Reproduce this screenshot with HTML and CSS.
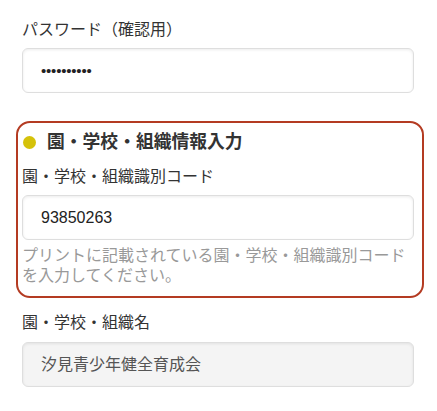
FILE: index.html
```html
<!DOCTYPE html>
<html lang="ja">
<head>
<meta charset="utf-8">
<link rel="stylesheet" href="styles.css">
</head>
<body>
<div class="form">
  <div class="field first">
    <div class="label">パスワード（確認用）</div>
    <div class="input"><span class="dots">••••••••••</span></div>
  </div>
  <div class="group">
    <div class="heading"><span class="dot"></span>園・学校・組織情報入力</div>
    <div class="field">
      <div class="label">園・学校・組織識別コード</div>
      <div class="input">93850263</div>
      <div class="hint">プリントに記載されている園・学校・組織識別コードを入力してください。</div>
    </div>
  </div>
  <div class="field last">
    <div class="label">園・学校・組織名</div>
    <div class="input disabled">汐見青少年健全育成会</div>
  </div>
</div>
</body>
</html>
```
FILE: styles.css
```css
html, body {
  margin: 0;
  padding: 0;
  background: #fff;
}
body {
  font-family: "Liberation Sans", "Noto Sans CJK JP", sans-serif;
  font-size: 16px;
  color: #333;
}
.form {
  padding: 18px 23px 0 22px;
}
.label {
  line-height: 24px;
  color: #333;
  margin-bottom: 6px;
}
.input {
  box-sizing: border-box;
  height: 45px;
  border: 1px solid #dedede;
  border-radius: 6px;
  background: #fff;
  box-shadow: inset 0 1px 3px rgba(0, 0, 0, 0.08);
  padding: 0 18px;
  display: flex;
  align-items: center;
  color: #222;
  line-height: 20px;
}
.dots {
  font-size: 15px;
  letter-spacing: -0.2px;
}
.input.disabled {
  background: #f4f4f4;
  color: #555;
}
.group {
  margin: 28px -10px 0 -6px;
  border: 2px solid #b43b22;
  border-radius: 14px;
  padding: 7px 8px 10px 4px;
}
.heading {
  display: flex;
  align-items: center;
  font-size: 17.8px;
  font-weight: bold;
  line-height: 24px;
  color: #333;
  margin-bottom: 11px;
}
.dot {
  width: 13px;
  height: 13px;
  border-radius: 50%;
  background: #d5c20a;
  margin: 0 11px 0 1px;
}
.hint {
  margin-top: 6px;
  line-height: 20px;
  color: #999;
}
.field.last {
  margin-top: 13px;
}
.field.last .label {
  margin-bottom: 7px;
}
```
